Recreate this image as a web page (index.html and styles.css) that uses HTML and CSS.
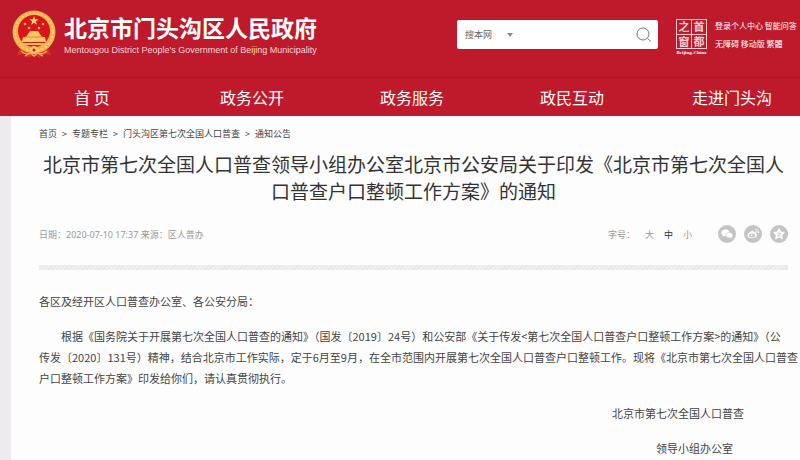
FILE: index.html
```html
<!DOCTYPE html>
<html lang="zh-CN">
<head>
  <meta charset="UTF-8">
  <meta name="viewport" content="width=device-width, initial-scale=1.0">
  <title>北京市门头沟区人民政府</title>
  <link rel="stylesheet" href="styles.css">
</head>
<body>
  <header class="header">
    <div class="top">
      <a href="#" class="brand">
        <svg class="emblem" viewBox="0 0 44 48" aria-hidden="true">
          <path d="M8 38 L5 45 L13 44 L16 48 L22 45 L28 48 L31 44 L39 45 L36 38 Z" fill="#d5331f"/>
          <circle cx="22" cy="22" r="21.5" fill="#f3b04c"/>
          <circle cx="22" cy="22" r="19" fill="none" stroke="#fbd47c" stroke-width="2" stroke-dasharray="2 2"/>
          <circle cx="22" cy="21" r="16" fill="#d8141c"/>
          <path d="M22 6 l1.200 3.200 3.400 .1 -2.700 2.100 1 3.300 -2.900 -1.900 -2.900 1.900 1 -3.300 -2.700 -2.100 3.400 -.1z" fill="#ffd873"/>
          <g fill="#f9bd5c">
            <circle cx="13" cy="14" r="1.3"/>
            <circle cx="17" cy="18" r="1.3"/>
            <circle cx="27" cy="18" r="1.3"/>
            <circle cx="31" cy="14" r="1.3"/>
          </g>
          <path d="M16 24 L18 21 H26 L28 24 L30 27 H33 L34 32 H10 L11 27 H14 Z" fill="#fbc765"/>
          <path d="M13 27 H31" stroke="#e08b31"/>
          <path d="M8 34 H36" stroke="#f7c35c" stroke-width="2"/>
          <circle cx="22" cy="40" r="4" fill="#fbc765"/>
          <circle cx="22" cy="40" r="1.5" fill="#d8141c"/>
          <path d="M9 41 Q15 46 19 42 M35 41 Q29 46 25 42 M13 46 L18 43 L22 46 L26 43 L31 46" fill="none" stroke="#f3a456" stroke-width="1.5"/>
        </svg>
        <span class="brand-text">
          <strong class="brand-name">北京市门头沟区人民政府</strong>
          <span class="brand-en">Mentougou District People's Government of Beijing Municipality</span>
        </span>
      </a>

      <form class="search" role="search">
        <select class="scope" aria-label="搜索范围">
          <option>搜本网</option>
        </select>
        <svg class="arrow" viewBox="0 0 6 4" aria-hidden="true"><path d="M0 0H6L3 4Z" fill="#888"/></svg>
        <input class="search-input" type="text" aria-label="搜索">
        <button class="search-btn" type="button" aria-label="搜索">
          <svg viewBox="0 0 16 16" fill="none" stroke="#777" aria-hidden="true">
            <circle cx="7" cy="7" r="6"/>
            <path d="M11.5 11.500L15 14.500"/>
          </svg>
        </button>
      </form>

      <a href="#" class="capital">
        <span class="seal"><span>之</span><span>首</span><span>窗</span><span>都</span></span>
        <span class="seal-en">Beijing-China</span>
      </a>

      <div class="links">
        <div><a href="#">登录个人中心</a> <a href="#">智能问答</a></div>
        <div><a href="#">无障碍</a> <a href="#">移动版</a> <a href="#">繁體</a></div>
      </div>
    </div>

    <nav class="nav">
      <a href="#">首 页</a>
      <a href="#">政务公开</a>
      <a href="#">政务服务</a>
      <a href="#">政民互动</a>
      <a href="#">走进门头沟</a>
    </nav>
  </header>

  <main class="page">
    <div class="crumbs">
      <a href="#">首页</a><span>&gt;</span><a href="#">专题专栏</a><span>&gt;</span><a href="#">门头沟区第七次全国人口普查</a><span>&gt;</span><a href="#">通知公告</a>
    </div>

    <h1 class="title">北京市第七次全国人口普查领导小组办公室北京市公安局关于印发《北京市第七次全国人口普查户口整顿工作方案》的通知</h1>

    <div class="meta">
      <span class="date">日期：2020-07-10 17:37 来源：区人普办</span>
      <div class="sizes">
        <span>字号：</span>
        <button type="button">大</button>
        <button type="button" class="active">中</button>
        <button type="button">小</button>
      </div>
      <div class="share">
        <a href="#" aria-label="微信">
          <svg viewBox="0 0 18 18" aria-hidden="true">
            <circle cx="9" cy="9" r="9" fill="#c4c4c4"/>
            <path d="M7.500 4.500c-2.400 0-4.200 1.500-4.200 3.400 0 1.100.6 2 1.500 2.600l-.4 1.400 1.600-.8c2.800.6 5.700-.7 5.700-3.200 0-1.900-1.800-3.400-4.200-3.400z" fill="#fff"/>
            <path d="M11.300 7.400c2 0 3.600 1.300 3.600 2.900 0 .9-.5 1.700-1.200 2.200l.3 1.200-1.400-.7c-2.300.5-4.800-.7-4.800-2.700 0-1.600 1.500-2.900 3.500-2.900z" fill="#fff" stroke="#c4c4c4" stroke-width=".6"/>
          </svg>
        </a>
        <a href="#" aria-label="微博">
          <svg viewBox="0 0 18 18" aria-hidden="true">
            <circle cx="9" cy="9" r="9" fill="#c4c4c4"/>
            <path d="M8 6c1-.4 1.800 0 1.500 1.200 1.500-.5 2.700-.1 2.200 1.200 1 .3 1.500 1 1.300 1.900-.4 1.800-2.800 3-5.300 3S3.400 12.200 3.400 10.500 6 6.700 8 6z" fill="#fff"/>
            <ellipse cx="8" cy="10.400" rx="3" ry="2" fill="#c4c4c4"/>
            <circle cx="7.500" cy="10.600" r="1" fill="#fff"/>
            <path d="M11 4.300c2.200-.4 4 1.300 3.500 3.700M11.200 6c1.100-.1 1.900.6 1.600 1.800" fill="none" stroke="#fff" stroke-width=".9"/>
          </svg>
        </a>
        <a href="#" aria-label="收藏">
          <svg viewBox="0 0 18 18" aria-hidden="true">
            <circle cx="9" cy="9" r="9" fill="#c4c4c4"/>
            <path d="M9 3.600l1.700 3.400 3.700.5-2.700 2.600.7 3.700L9 12l-3.400 1.800.7-3.700-2.700-2.600 3.700-.5z" fill="#fff" stroke="#fff" stroke-linejoin="round"/>
            <path d="M7.300 8.200h3.300l-3.100 2.700h3.300" fill="none" stroke="#c4c4c4" stroke-width=".9"/>
          </svg>
        </a>
      </div>
    </div>

    <div class="divider"></div>

    <article class="content">
      <p>各区及经开区人口普查办公室、各公安分局：</p>
      <p class="indent">根据《国务院关于开展第七次全国人口普查的通知》（国发〔2019〕24号）和公安部《关于传发&lt;第七次全国人口普查户口整顿工作方案&gt;的通知》（公<br>传发〔2020〕131号）精神，结合北京市工作实际，定于6月至9月，在全市范围内开展第七次全国人口普查户口整顿工作。现将《北京市第七次全国人口普查<br>户口整顿工作方案》印发给你们，请认真贯彻执行。</p>
      <p class="sign">北京市第七次全国人口普查</p>
      <p class="sign office">领导小组办公室</p>
    </article>
  </main>
</body>
</html>
```

FILE: styles.css
```css
* {
  box-sizing: border-box;
}
body {
  margin: 0;
  background: #edebee;
  color: #444;
  font-family: "Noto Sans CJK SC", sans-serif;
  overflow: hidden;
}
a {
  color: inherit;
  text-decoration: none;
}
button, select, input {
  border: 0;
  padding: 0;
  background: none;
  font-family: inherit;
  color: inherit;
}
svg {
  display: block;
}

/* header */
.header {
  background: #be1a2b;
  color: #fff;
}
.top {
  display: flex;
  align-items: flex-start;
  height: 77px;
  padding: 10px 0 0 12px;
}
.brand {
  display: flex;
  gap: 8px;
}
.emblem {
  width: 44px;
  height: 48px;
}
.brand-text {
  display: flex;
  flex-direction: column;
  padding-top: 2px;
  white-space: nowrap;
}
.brand-name {
  font-size: 23px;
  line-height: 30px;
}
.brand-en {
  font-family: "Liberation Sans", Arial, sans-serif;
  font-size: 9px;
  line-height: 16px;
  color: #f8d5d8;
}
.search {
  display: flex;
  align-items: center;
  width: 201px;
  height: 29px;
  margin: 10px 18px 0 auto;
  padding: 0 6px 0 8px;
  background: #fff;
  border-radius: 2px;
  color: #666;
}
.scope {
  appearance: none;
  width: 42px;
  font-size: 9px;
}
.arrow {
  width: 6px;
  height: 4px;
}
.search-input {
  flex: 1;
  min-width: 0;
  height: 100%;
  font-size: 9px;
}
.search-btn svg {
  width: 16px;
  height: 16px;
}
.capital {
  display: flex;
  flex-direction: column;
  align-items: center;
  width: 31px;
  margin: 9px 8px 0 0;
}
.seal {
  display: grid;
  grid-template-columns: 1fr 1fr;
  gap: 1px;
  width: 31px;
  height: 30px;
  padding: 1px;
  background: #f6cdd1;
}
.seal span {
  display: flex;
  align-items: center;
  justify-content: center;
  background: #be1a2b;
  color: #f6cdd1;
  font-size: 11px;
  font-weight: bold;
  line-height: 13px;
}
.seal-en {
  font-family: "Liberation Serif", serif;
  font-size: 5px;
  font-weight: bold;
  line-height: 7px;
  white-space: nowrap;
}
.links {
  width: 85px;
  padding-top: 7px;
  font-size: 8px;
  line-height: 18px;
  white-space: nowrap;
}
.nav {
  display: grid;
  grid-template-columns: repeat(5, minmax(160px, 1fr));
  padding-left: 12px;
  border-top: 1px solid #a91726;
  font-size: 16px;
  line-height: 38px;
  text-align: center;
}

/* article */
.page {
  min-height: calc(100vh - 116px);
  margin-left: 11px;
  padding: 9px 12px 0 28px;
  background: #fdfdfd;
}
.crumbs {
  display: flex;
  font-size: 9px;
  line-height: 18px;
}
.crumbs span {
  width: 15px;
  text-align: center;
}
.title {
  margin: 7px 0 0;
  color: #333;
  font-size: 19px;
  font-weight: 400;
  line-height: 27px;
  text-align: center;
}
.meta {
  display: flex;
  align-items: center;
  height: 18px;
  margin-top: 21px;
  color: #999;
  font-size: 9px;
}
.date {
  font-family: "Noto Sans", "Noto Sans CJK SC", sans-serif;
}
.sizes {
  display: flex;
  gap: 10px;
  margin-left: auto;
}
.sizes button {
  font-size: 9px;
}
.sizes .active {
  color: #333;
}
.share {
  display: flex;
  gap: 8px;
  margin-left: 26px;
}
.share svg {
  width: 18px;
  height: 18px;
}
.divider {
  height: 5px;
  margin-top: 22px;
  background: repeating-linear-gradient(135deg, #e6e6e6 0 1px, #f0f0f0 1px 3px);
}
.content {
  padding-top: 21px;
  font-size: 11px;
  line-height: 21px;
}
.content p {
  margin: 0 0 14px;
  white-space: nowrap;
}
.content .indent {
  text-indent: 2em;
}
.content .sign {
  padding-right: 4em;
  text-align: right;
}
.content .office {
  padding-right: 5em;
  margin-bottom: 0;
}
```
